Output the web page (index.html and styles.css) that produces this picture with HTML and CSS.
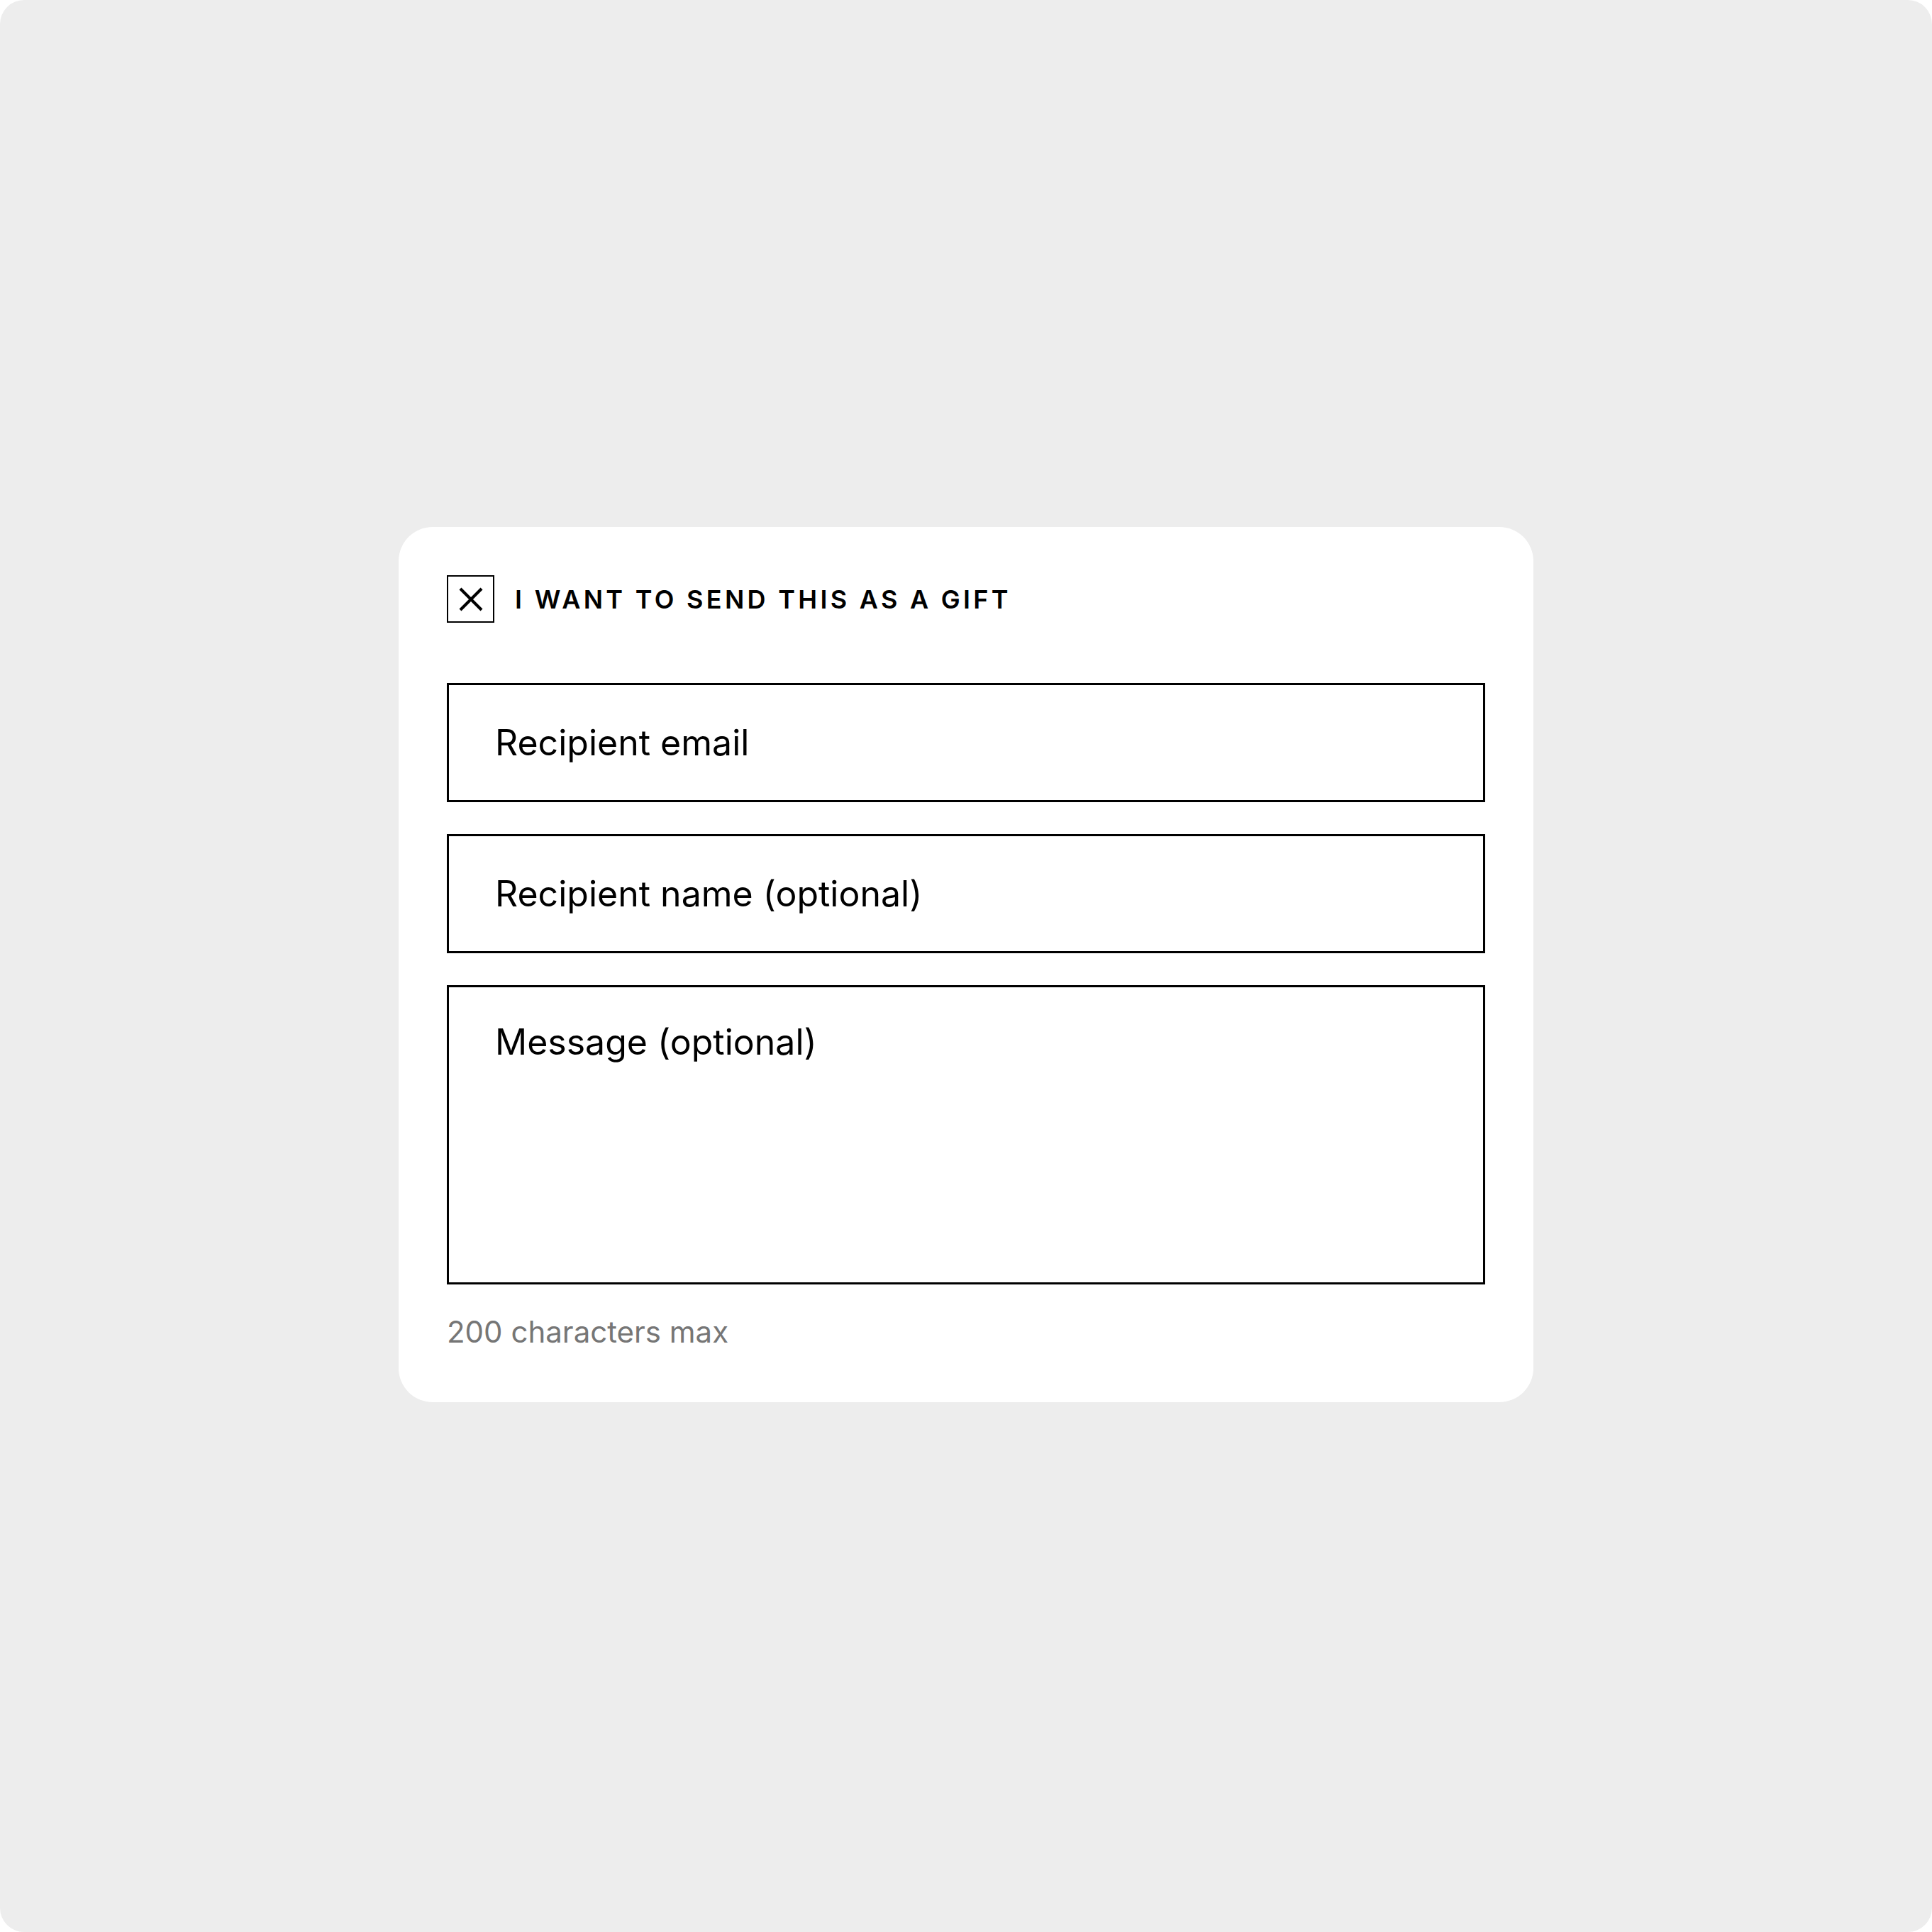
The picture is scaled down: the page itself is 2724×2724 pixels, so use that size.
FILE: index.html
```html
<!DOCTYPE html>
<html lang="en">
<head>
<meta charset="utf-8">
<title>Gift</title>
<link rel="stylesheet" href="styles.css">
</head>
<body>
<div class="page">
  <form class="card">
    <label class="gift-toggle">
      <span class="checkbox">
        <svg width="34" height="34" viewBox="0 0 34 34" aria-hidden="true">
          <path d="M2 2 L32 32 M32 2 L2 32" stroke="#000" stroke-width="4.2" fill="none"/>
        </svg>
      </span>
      <span class="gift-label">I WANT TO SEND THIS AS A GIFT</span>
    </label>
    <div class="fields">
      <input class="field" type="email" placeholder="Recipient email">
      <input class="field" type="text" placeholder="Recipient name (optional)">
      <textarea class="field area" placeholder="Message (optional)"></textarea>
    </div>
    <p class="hint">200 characters max</p>
  </form>
</div>
</body>
</html>
```
FILE: styles.css
```css
html, body {
  margin: 0;
  padding: 0;
  background: #ffffff;
}
.page {
  width: 2724px;
  height: 2724px;
  background: #ededed;
  border-radius: 34px;
  display: flex;
  align-items: center;
  justify-content: center;
  font-family: Inter, "Liberation Sans", sans-serif;
}
.card {
  width: 1600px;
  box-sizing: border-box;
  padding: 68px 68px 72px;
  background: #ffffff;
  border-radius: 48px;
  margin: 0 0 4px;
}
.gift-toggle {
  display: flex;
  align-items: center;
  gap: 29px;
}
.checkbox {
  width: 67px;
  height: 67px;
  box-sizing: border-box;
  border: 2.5px solid #000;
  display: flex;
  align-items: center;
  justify-content: center;
}
.gift-label {
  font-size: 36px;
  font-weight: 600;
  letter-spacing: 4.3px;
  color: #000;
  line-height: 1;
}
.fields {
  margin-top: 85px;
  display: flex;
  flex-direction: column;
  gap: 45px;
}
.field {
  display: block;
  width: 100%;
  height: 168px;
  box-sizing: border-box;
  border: 3px solid #000;
  border-radius: 0;
  padding: 0 65px;
  font-family: Inter, "Liberation Sans", sans-serif;
  font-size: 50px;
  line-height: 60px;
  color: #000;
  background: #fff;
  outline: none;
  margin: 0;
}
.field::placeholder {
  color: #000;
  opacity: 1;
}
.area {
  height: 422px;
  padding-top: 47px;
  resize: none;
}
.hint {
  margin: 39px 0 0;
  font-size: 42px;
  line-height: 55px;
  color: #767676;
}
```
